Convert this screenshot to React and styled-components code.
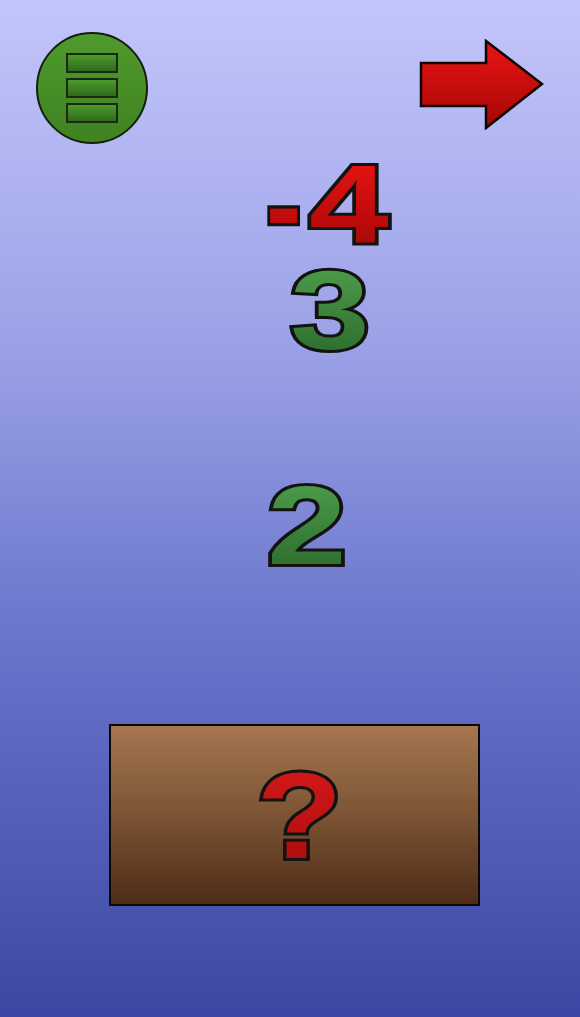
import React from 'react'
import styled, { createGlobalStyle } from 'styled-components'

const Global = createGlobalStyle`
  html, body {
    margin: 0;
    padding: 0;
  }
  body {
    background: linear-gradient(to bottom, #c3c6fa 0%, #9aa0e6 35%, #6a76cc 62%, #3b47a2 100%);
    min-height: 1017px;
    font-family: "Liberation Sans", Arial, sans-serif;
  }
`

const Page = styled.div`
  height: 1017px;
  display: flex;
  flex-direction: column;
`

const TopBar = styled.div`
  display: flex;
  justify-content: space-between;
  align-items: flex-start;
  padding: 32px 36px 0 36px;
`

const MenuButton = styled.button`
  width: 112px;
  height: 112px;
  border-radius: 50%;
  border: 2px solid #14200c;
  background: linear-gradient(to bottom, #4f9a2c, #3f8222);
  box-sizing: border-box;
  padding: 0;
  display: flex;
  flex-direction: column;
  align-items: center;
  justify-content: center;
  gap: 5px;
  cursor: pointer;
`

const MenuBar = styled.span`
  display: block;
  width: 52px;
  height: 20px;
  box-sizing: border-box;
  border: 2px solid #1a2a10;
  background: linear-gradient(to bottom, #4c9a2c, #2f6a1c);
`

const NextButton = styled.button`
  margin-top: 7px;
  width: 125px;
  height: 91px;
  padding: 0;
  border: none;
  background: none;
  cursor: pointer;
  svg {
    display: block;
  }
`

const Numbers = styled.div`
  display: flex;
  flex-direction: column;
  align-items: flex-start;
  margin-top: 11px;
`

const Row = styled.div`
  display: flex;
  height: 100px;
  margin-left: ${p => p.$left}px;
  margin-top: ${p => p.$top || 0}px;
`

const fills = {
  red: 'linear-gradient(to bottom, #ea1414, #a40606)',
  green: 'linear-gradient(to bottom, #4f9e4c, #2c6a2c)',
  question: 'linear-gradient(to bottom, #d81a1a, #a80c0c)',
}

// outlined text: dark outline layer underneath, gradient fill on top
const Outlined = styled.span`
  position: relative;
  display: inline-block;
  isolation: isolate;
  font-family: "Liberation Sans", Arial, sans-serif;
  font-weight: 700;
  white-space: nowrap;
  color: transparent;
  transform: translateY(${p => p.$dy || 0}px) scale(${p => p.$sx || 1}, ${p => p.$sy || 1});
  transform-origin: ${p => p.$origin || 'left center'};

  &::before,
  &::after {
    content: attr(data-text);
    position: absolute;
    inset: 0;
  }
  &::before {
    color: #121412;
    -webkit-text-stroke: 6px #121412;
  }
  &::after {
    background: ${p => fills[p.$tone]};
    -webkit-background-clip: text;
    background-clip: text;
    -webkit-text-fill-color: transparent;
  }
`

const Digit = styled(Outlined)`
  font-size: 112px;
  line-height: 100px;
  height: 100px;
  margin-left: ${p => p.$gap || 0}px;
`

const AnswerBox = styled.button`
  margin-top: 148px;
  margin-left: 109px;
  width: 371px;
  height: 182px;
  box-sizing: border-box;
  border: 2px solid #0c0804;
  background: linear-gradient(to bottom, #a57650 0%, #7c5434 50%, #4e2c18 100%);
  display: flex;
  align-items: center;
  justify-content: center;
  padding: 0;
  cursor: pointer;
`

const Question = styled(Outlined)`
  margin-left: 11px;
  font-size: 123px;
  line-height: 1;
`

function Arrow() {
  return (
    <svg width="125" height="91" viewBox="0 0 125 91">
      <defs>
        <linearGradient id="arrowFill" x1="0" y1="0" x2="0" y2="1">
          <stop offset="0" stopColor="#ec1414" />
          <stop offset="1" stopColor="#a40606" />
        </linearGradient>
      </defs>
      <polygon
        points="2,24 67,24 67,2 123,45 67,89 67,67 2,67"
        fill="url(#arrowFill)"
        stroke="#120404"
        strokeWidth="2.5"
      />
    </svg>
  )
}

function Glyph({ text, ...rest }) {
  return (
    <Digit data-text={text} {...rest}>
      {text}
    </Digit>
  )
}

export default function App() {
  return (
    <>
      <Global />
      <Page>
        <TopBar>
          <MenuButton aria-label="menu">
            <MenuBar />
            <MenuBar />
            <MenuBar />
          </MenuButton>
          <NextButton aria-label="next">
            <Arrow />
          </NextButton>
        </TopBar>
        <Numbers>
          <Row $left={265}>
            <Glyph text="-" $tone="red" $sx={0.95} $sy={1.08} $dy={2} $origin="center 66%" />
            <Glyph text="4" $tone="red" $sx={1.28} $gap={7} />
          </Row>
          <Row $left={290} $top={6}>
            <Glyph text="3" $tone="green" $sx={1.28} />
          </Row>
          <Row $left={267} $top={115}>
            <Glyph text="2" $tone="green" $sx={1.28} />
          </Row>
        </Numbers>
        <AnswerBox aria-label="answer">
          <Question data-text="?" $tone="question" $sx={1.15} $origin="center">?</Question>
        </AnswerBox>
      </Page>
    </>
  )
}
